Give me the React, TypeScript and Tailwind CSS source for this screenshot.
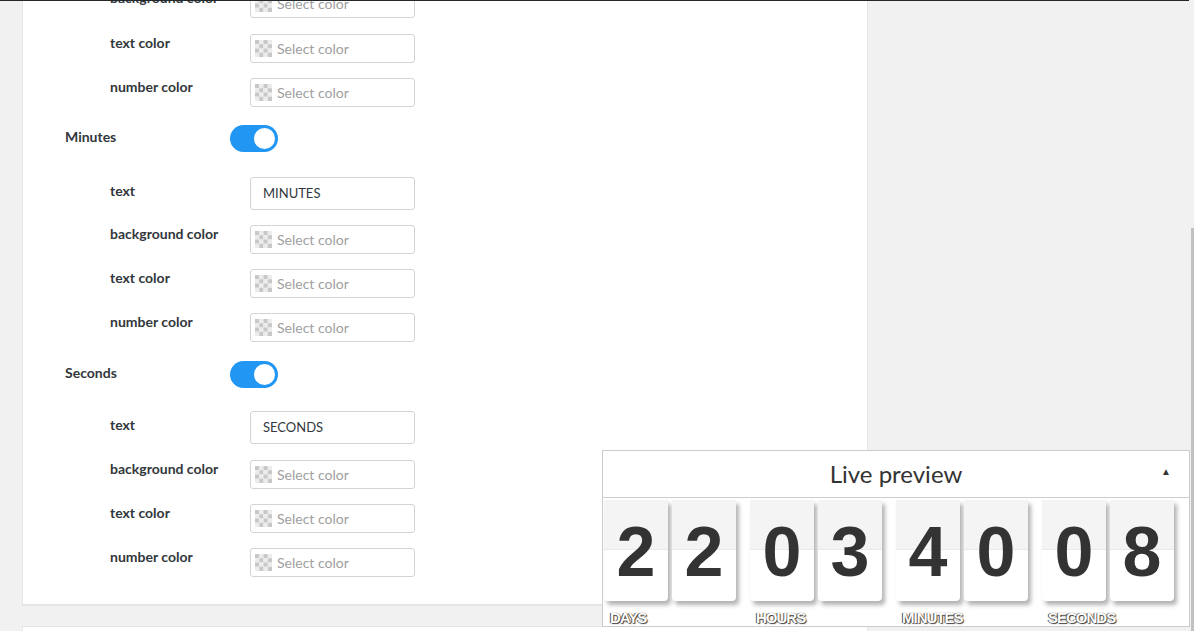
import React from "react";

type Row =
  | { kind: "color"; label: string; h: number }
  | { kind: "text"; label: string; value: string; h: number }
  | { kind: "toggle"; label: string; h: number };

const rows: Row[] = [
  { kind: "color", label: "background color", h: 45 },
  { kind: "color", label: "text color", h: 44 },
  { kind: "color", label: "number color", h: 47 },
  { kind: "toggle", label: "Minutes", h: 52 },
  { kind: "text", label: "text", value: "MINUTES", h: 48 },
  { kind: "color", label: "background color", h: 44 },
  { kind: "color", label: "text color", h: 44 },
  { kind: "color", label: "number color", h: 48 },
  { kind: "toggle", label: "Seconds", h: 50 },
  { kind: "text", label: "text", value: "SECONDS", h: 49 },
  { kind: "color", label: "background color", h: 44 },
  { kind: "color", label: "text color", h: 44 },
  { kind: "color", label: "number color", h: 56 },
];

const groups = [
  { label: "DAYS", digits: ["2", "2"] },
  { label: "HOURS", digits: ["0", "3"] },
  { label: "MINUTES", digits: ["4", "0"] },
  { label: "SECONDS", digits: ["0", "8"] },
];

function Checker() {
  const cells = [];
  for (let r = 0; r < 4; r++) {
    for (let c = 0; c < 4; c++) {
      cells.push(
        <rect
          key={`${r}-${c}`}
          x={c * 4}
          y={r * 4}
          width="4"
          height="4"
          fill={(r + c) % 2 === 0 ? "#c8c8c8" : "#ececec"}
        />
      );
    }
  }
  return (
    <svg width="17" height="17" viewBox="0 0 16 16" className="shrink-0">
      {cells}
    </svg>
  );
}

function ColorInput() {
  return (
    <div className="flex items-center gap-[5px] w-[165px] h-[29px] border border-[#d4d4d4] rounded-[3px] bg-white pl-[4px]">
      <Checker />
      <span className="text-[14px] text-[#a0a0a0]">Select color</span>
    </div>
  );
}

function Toggle() {
  return (
    <div className="w-[48px] h-[27px] rounded-full bg-[#2196f3] flex items-center justify-end pr-[3px]">
      <div className="w-[21px] h-[21px] rounded-full bg-white" />
    </div>
  );
}

function FormRow({ row }: { row: Row }) {
  if (row.kind === "toggle") {
    return (
      <div className="flex items-start" style={{ height: row.h }}>
        <div className="w-[207px] pl-[42px] pt-[3px] leading-[18px] text-[14px] font-bold text-[#32373c]">
          {row.label}
        </div>
        <Toggle />
      </div>
    );
  }
  return (
    <div className="flex items-start" style={{ height: row.h }}>
      <div
        className={`w-[227px] pl-[87px] leading-[18px] text-[14px] font-bold text-[#32373c] ${
          row.kind === "text" ? "pt-[5px]" : "pt-0"
        }`}
      >
        {row.label}
      </div>
      {row.kind === "text" ? (
        <div className="w-[165px] h-[33px] border border-[#d4d4d4] rounded-[3px] bg-white pl-[12px] flex items-center text-[13px] text-[#32373c]">
          {row.value}
        </div>
      ) : (
        <ColorInput />
      )}
    </div>
  );
}

function Card({ d }: { d: string }) {
  return (
    <div className="relative w-[64px] h-[101px] rounded-b-[4px] overflow-hidden bg-white shadow-[3px_4px_4px_rgba(0,0,0,0.3)]">
      <div className="h-[50px] bg-[#f4f4f4] border-b border-[#e8e8e8]" />
      <div className="absolute inset-0 flex items-center justify-center pt-[3px] text-[70px] font-bold leading-none text-[#333] font-['Liberation_Sans',Arial,sans-serif]">
        {d}
      </div>
    </div>
  );
}

export default function App() {
  return (
    <div className="relative w-[1194px] h-[631px] overflow-hidden bg-[#f1f1f1] font-['Lato',sans-serif]">
      <div className="absolute top-0 left-0 w-[1189px] h-[1px] bg-[#23282d] z-20" />

      {/* settings panel */}
      <div className="ml-[22px] mt-[-12px] w-[846px] bg-white border border-[#e5e5e5] shadow-[0_1px_1px_rgba(0,0,0,0.04)]">
        {rows.map((row, i) => (
          <FormRow key={i} row={row} />
        ))}
      </div>
      <div className="ml-[22px] mt-[21px] w-[846px] h-[40px] bg-white border border-[#e5e5e5]" />

      {/* scrollbar */}
      <div className="absolute right-0 top-[228px] w-[3px] h-[403px] bg-[#c1c1c1]" />

      {/* live preview */}
      <div className="absolute left-[602px] top-[450px] w-[588px] h-[177px] bg-white border border-[#cccccc] z-10">
        <div className="relative h-[47px] border-b border-[#cccccc] flex items-center justify-center text-[24px] text-[#333]">
          Live preview
          <span className="absolute right-[18px] top-[13px] text-[10px] text-[#333]">▲</span>
        </div>
        <div className="flex gap-[14px] pt-[2px] pl-[1px]">
          {groups.map((g) => (
            <div key={g.label} className="flex flex-col">
              <div className="flex gap-[4px]">
                {g.digits.map((d, i) => (
                  <Card key={i} d={d} />
                ))}
              </div>
              <div className="pl-[6px] pt-[9px] text-[15px] font-bold leading-none tracking-[-1px] text-white font-['Liberation_Sans',Arial,sans-serif] [text-shadow:0_0_1px_#333,1px_1px_1px_#444,-1px_0_0_#666]">
                {g.label}
              </div>
            </div>
          ))}
        </div>
      </div>
    </div>
  );
}
